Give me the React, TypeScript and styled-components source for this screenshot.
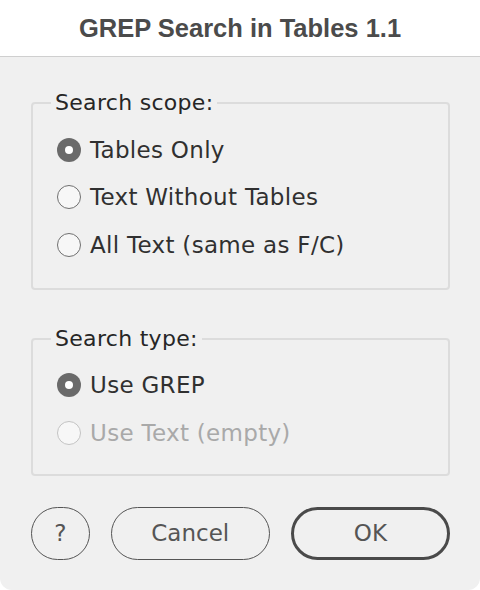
import styled, { createGlobalStyle } from "styled-components";

const GlobalStyle = createGlobalStyle`
  html, body {
    margin: 0;
    padding: 0;
    background: #ffffff;
  }
`;

const Dialog = styled.div`
  width: 480px;
  height: 590px;
  display: flex;
  flex-direction: column;
  font-family: "DejaVu Sans", "Liberation Sans", sans-serif;
`;

const TitleBar = styled.header`
  height: 56px;
  flex-shrink: 0;
  display: flex;
  align-items: center;
  justify-content: center;
  background: #ffffff;
  border-bottom: 1px solid #cfcfcf;
`;

const Title = styled.h1`
  margin: 0;
  font-family: "Liberation Sans", Arial, sans-serif;
  font-size: 25.5px;
  font-weight: 700;
  color: #4b4b4b;
`;

const Body = styled.main`
  flex: 1;
  background: #f0f0f0;
  border-radius: 0 0 12px 12px;
  padding: 34px 30px 0 31px;
  display: flex;
  flex-direction: column;
`;

const Group = styled.fieldset<{ $gap: number; $padBottom: number }>`
  margin: 0 0 ${(p) => p.$gap}px 0;
  padding: 11px 0 ${(p) => p.$padBottom}px 0;
  border: 2px solid #dcdcdc;
  border-radius: 4px;
  min-width: 0;
`;

const Legend = styled.legend`
  margin-left: 18px;
  padding: 0 4px;
  font-size: 22px;
  letter-spacing: 0.3px;
  line-height: 24px;
  color: #262626;
`;

const Option = styled.label<{ $disabled?: boolean }>`
  height: 47.5px;
  padding-left: 24px;
  display: flex;
  align-items: center;
  gap: 9px;
  font-size: 23px;
  letter-spacing: 0.3px;
  color: ${(p) => (p.$disabled ? "#a9a9a9" : "#303030")};
`;

const Radio = styled.span<{ $checked?: boolean; $disabled?: boolean }>`
  width: 24px;
  height: 24px;
  box-sizing: border-box;
  border-radius: 50%;
  flex-shrink: 0;
  display: flex;
  align-items: center;
  justify-content: center;
  background: ${(p) => (p.$checked ? "#6a6a6a" : "#f7f7f7")};
  border: ${(p) =>
    p.$checked
      ? "none"
      : p.$disabled
      ? "1.5px solid #c3c3c3"
      : "1.5px solid #707070"};

  &::after {
    content: "";
    display: ${(p) => (p.$checked ? "block" : "none")};
    width: 8px;
    height: 8px;
    border-radius: 50%;
    background: #ffffff;
  }
`;

const ButtonRow = styled.div`
  display: flex;
  gap: 21px;
  margin-top: 31px;
`;

const Button = styled.button<{ $width: number; $primary?: boolean }>`
  width: ${(p) => p.$width}px;
  height: 53px;
  box-sizing: border-box;
  border-radius: 27px;
  background: transparent;
  border: ${(p) => (p.$primary ? "3px solid #4a4a4a" : "1.5px solid #555555")};
  font-family: "DejaVu Sans", "Liberation Sans", sans-serif;
  font-size: 23px;
  color: #555555;
  padding: 0;
`;

const options1 = [
  { label: "Tables Only", checked: true },
  { label: "Text Without Tables" },
  { label: "All Text (same as F/C)" },
];

const options2 = [
  { label: "Use GREP", checked: true },
  { label: "Use Text (empty)", disabled: true },
];

export default function App() {
  return (
    <>
      <GlobalStyle />
      <Dialog>
        <TitleBar>
          <Title>GREP Search in Tables 1.1</Title>
        </TitleBar>
        <Body>
          <Group $gap={37} $padBottom={19}>
            <Legend>Search scope:</Legend>
            {options1.map((o) => (
              <Option key={o.label}>
                <Radio $checked={o.checked} />
                {o.label}
              </Option>
            ))}
          </Group>
          <Group $gap={0} $padBottom={17}>
            <Legend>Search type:</Legend>
            {options2.map((o) => (
              <Option key={o.label} $disabled={o.disabled}>
                <Radio $checked={o.checked} $disabled={o.disabled} />
                {o.label}
              </Option>
            ))}
          </Group>
          <ButtonRow>
            <Button $width={59}>?</Button>
            <Button $width={160}>Cancel</Button>
            <Button $width={160} $primary>
              OK
            </Button>
          </ButtonRow>
        </Body>
      </Dialog>
    </>
  );
}
